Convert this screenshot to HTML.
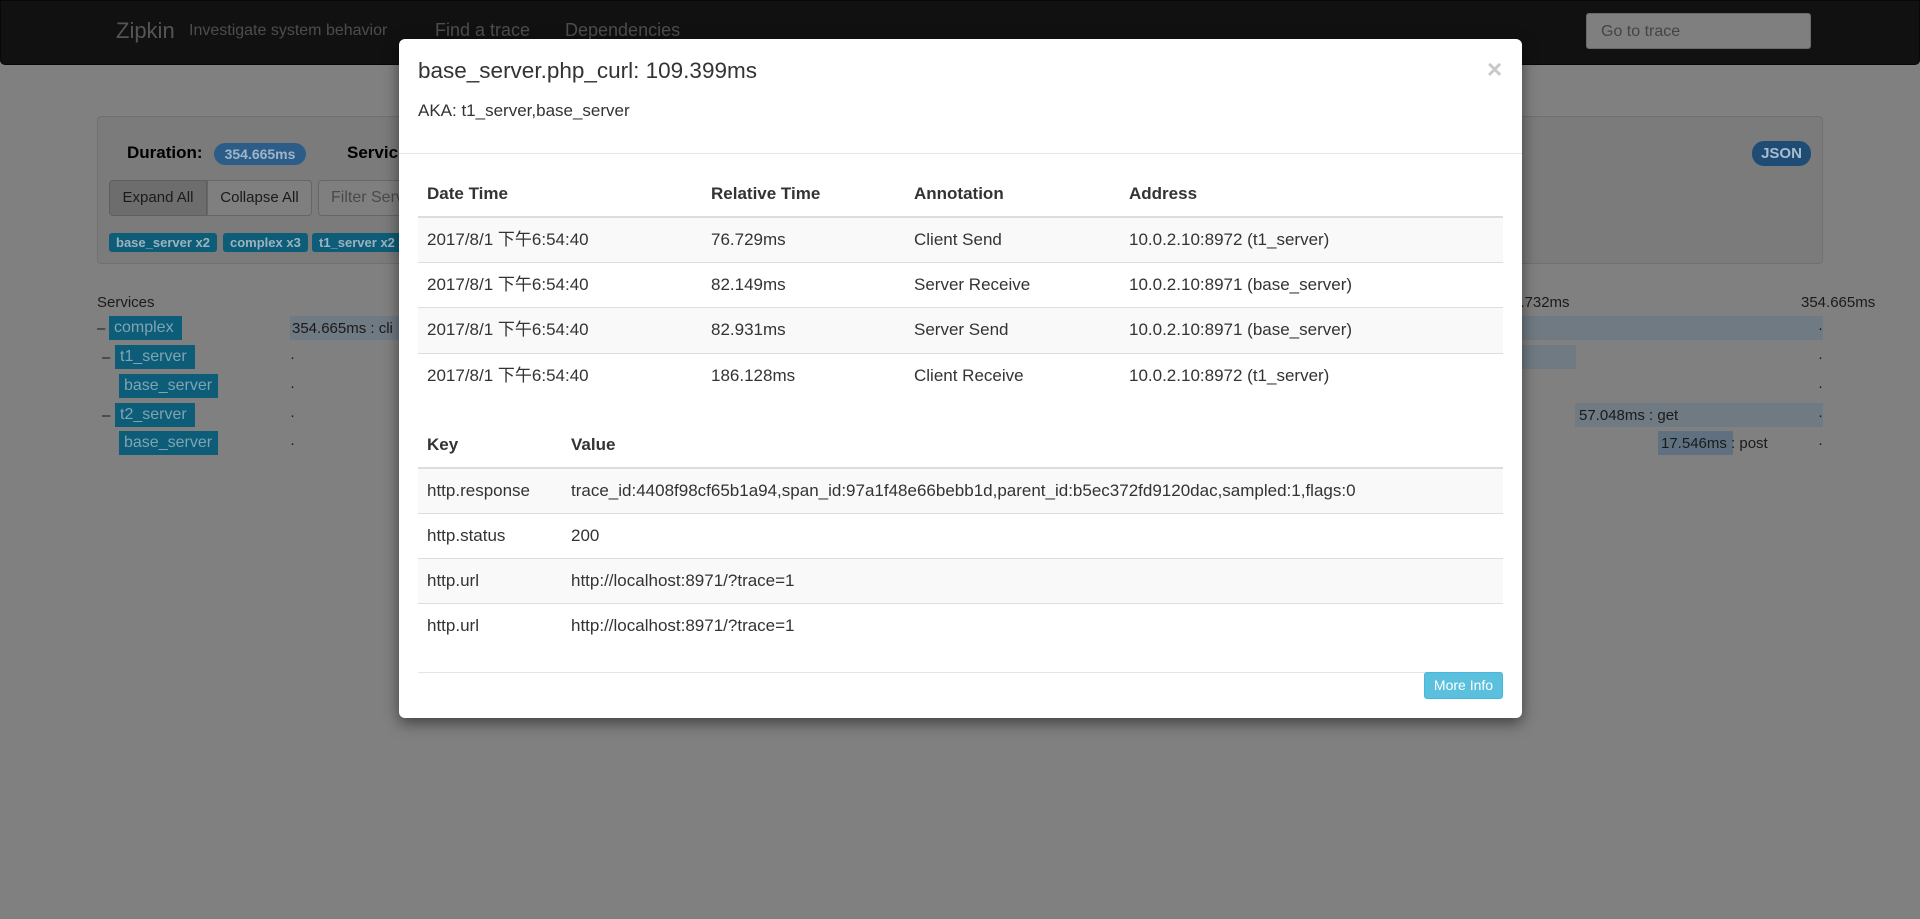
<!DOCTYPE html>
<html><head><meta charset="utf-8"><style>
*{box-sizing:border-box;margin:0;padding:0}
body{width:1920px;height:919px;background:#808080;font-family:"Liberation Sans","Noto Sans CJK SC",sans-serif;font-size:17px;color:#333;position:relative;overflow:hidden}
.a{position:absolute;white-space:nowrap}
.nav{left:0;top:0;width:1920px;height:65px;background:#111;border-radius:0 0 5px 5px;border:1px solid #080808}
.nv{color:#4d4d4d;font-size:18px}
.bdg{background:#0d5d78;color:#9cb3bd;font-weight:bold;font-size:13px;border-radius:3px;height:19px;line-height:19px;padding:0 7px}
.svc{background:#0d5d78;color:#7fa4b3;font-size:16px;line-height:24px;height:24px;padding:0 5px}
.bar{background:#707a83;height:24px}
.txt{color:#1a1a1a;font-size:15px}
.modal{left:399px;top:39px;width:1123px;height:679px;background:#fff;border-radius:6px;box-shadow:0 5px 15px rgba(0,0,0,.5)}
table{border-collapse:collapse;position:absolute;left:19px;width:1085px;font-size:17px;line-height:20px}
th{text-align:left;font-weight:bold;padding:0 9px;border-bottom:2px solid #ddd}
td{padding:0 9px;border-top:1px solid #ddd;vertical-align:middle}
.cj{display:inline-block;height:20px;line-height:20px;overflow:visible;vertical-align:top}
tr.s td{background:#f9f9f9}
</style></head><body>
<div class="a nav"></div>
<div class="a" style="left:116px;top:18px;font-size:22px;color:#555">Zipkin</div>
<div class="a nv" style="left:189px;top:22px;font-size:16px">Investigate system behavior</div>
<div class="a nv" style="left:435px;top:20px">Find a trace</div>
<div class="a nv" style="left:565px;top:20px">Dependencies</div>
<div class="a" style="left:1586px;top:13px;width:225px;height:36px;background:#7f7f7f;border-radius:3px;border:1px solid #6a6a6a;color:#444;font-size:16px;padding:9px 14px">Go to trace</div>

<div class="a" style="left:97px;top:116px;width:1726px;height:148px;background:#7b7b7b;border:1px solid #707070;border-radius:4px"></div>
<div class="a" style="left:127px;top:143px;font-weight:bold;color:#000;font-size:17px">Duration:</div>
<div class="a" style="left:214px;top:143px;width:92px;height:22px;border-radius:11px;background:#2c5d88;color:#9fb4c7;font-weight:bold;font-size:14px;text-align:center;line-height:22px">354.665ms</div>
<div class="a" style="left:347px;top:143px;font-weight:bold;color:#000;font-size:17px">Servic</div>
<div class="a" style="left:1752px;top:141px;width:59px;height:25px;border-radius:12px;background:#1f4c75;color:#a8bccd;font-weight:bold;font-size:15px;text-align:center;line-height:25px">JSON</div>
<div class="a" style="left:109px;top:180px;width:98px;height:36px;background:#6d6d6d;border:1px solid #5f5f5f;border-radius:4px 0 0 4px;color:#1a1a1a;font-size:15px;line-height:34px;text-align:center">Expand All</div>
<div class="a" style="left:207px;top:180px;width:105px;height:36px;background:#7f7f7f;border:1px solid #666;border-radius:0 4px 4px 0;color:#1a1a1a;font-size:15px;line-height:34px;text-align:center">Collapse All</div>
<div class="a" style="left:318px;top:180px;width:90px;height:36px;background:#7f7f7f;border:1px solid #666;border-radius:4px;color:#4a4a4a;font-size:16px;line-height:34px;padding-left:12px">Filter Serv</div>
<div class="a bdg" style="left:109px;top:233px">base_server x2</div>
<div class="a bdg" style="left:223px;top:233px">complex x3</div>
<div class="a bdg" style="left:312px;top:233px">t1_server x2</div>

<div class="a txt" style="left:97px;top:294px">Services</div>
<div class="a txt" style="left:1512px;top:294px">3.732ms</div>
<div class="a txt" style="left:1801px;top:294px">354.665ms</div>
<div class="a txt" style="left:97px;top:320px">–</div>
<div class="a txt" style="left:102px;top:349px">–</div>
<div class="a txt" style="left:102px;top:407px">–</div>
<div class="a svc" style="left:109px;top:316px;width:73px">complex</div>
<div class="a svc" style="left:115px;top:345px;width:80px">t1_server</div>
<div class="a svc" style="left:119px;top:374px;width:99px">base_server</div>
<div class="a svc" style="left:115px;top:403px;width:80px">t2_server</div>
<div class="a svc" style="left:119px;top:431px;width:99px">base_server</div>
<div class="a bar" style="left:290px;top:316px;width:1533px"></div>
<div class="a txt" style="left:292px;top:320px">354.665ms : cli</div>
<div class="a bar" style="left:1500px;top:345px;width:76px"></div>
<div class="a bar" style="left:1575px;top:403px;width:248px"></div>
<div class="a txt" style="left:1579px;top:407px">57.048ms : get</div>
<div class="a" style="left:1658px;top:431px;width:75px;height:24px;background:#5f7181"></div>
<div class="a txt" style="left:1661px;top:435px">17.546ms : post</div>
<div class="a txt" style="left:1818px;top:320px">·</div>
<div class="a txt" style="left:1818px;top:349px">·</div>
<div class="a txt" style="left:1818px;top:378px">·</div>
<div class="a txt" style="left:1818px;top:407px">·</div>
<div class="a txt" style="left:1818px;top:435px">·</div>
<div class="a txt" style="left:290px;top:349px">·</div>
<div class="a txt" style="left:290px;top:378px">·</div>
<div class="a txt" style="left:290px;top:407px">·</div>
<div class="a txt" style="left:290px;top:435px">·</div>

<div class="a modal">
<div class="a" style="left:19px;top:19px;font-size:22.5px;color:#333">base_server.php_curl: 109.399ms</div>
<div class="a" style="left:19px;top:62px;font-size:17px">AKA: t1_server,base_server</div>
<div class="a" style="left:1088px;top:15px;font-size:26px;font-weight:bold;color:#c8c8c8">×</div>
<div class="a" style="left:0;top:114px;width:1123px;height:1px;background:#e5e5e5"></div>
<table style="top:133px">
<tr style="height:45px"><th style="width:284px">Date Time</th><th style="width:203px">Relative Time</th><th style="width:215px">Annotation</th><th>Address</th></tr>
<tr class="s" style="height:45px"><td><span class="cj">2017/8/1 下午6:54:40</span></td><td>76.729ms</td><td>Client Send</td><td>10.0.2.10:8972 (t1_server)</td></tr>
<tr style="height:45px"><td><span class="cj">2017/8/1 下午6:54:40</span></td><td>82.149ms</td><td>Server Receive</td><td>10.0.2.10:8971 (base_server)</td></tr>
<tr class="s" style="height:46px"><td><span class="cj">2017/8/1 下午6:54:40</span></td><td>82.931ms</td><td>Server Send</td><td>10.0.2.10:8971 (base_server)</td></tr>
<tr style="height:45px"><td><span class="cj">2017/8/1 下午6:54:40</span></td><td>186.128ms</td><td>Client Receive</td><td>10.0.2.10:8972 (t1_server)</td></tr>
</table>
<table style="top:383px">
<tr style="height:46px"><th style="width:144px">Key</th><th>Value</th></tr>
<tr class="s" style="height:45px"><td>http.response</td><td>trace_id:4408f98cf65b1a94,span_id:97a1f48e66bebb1d,parent_id:b5ec372fd9120dac,sampled:1,flags:0</td></tr>
<tr style="height:45px"><td>http.status</td><td>200</td></tr>
<tr class="s" style="height:45px"><td>http.url</td><td>http://localhost:8971/?trace=1</td></tr>
<tr style="height:45px"><td>http.url</td><td>http://localhost:8971/?trace=1</td></tr>
</table>
<div class="a" style="left:19px;top:633px;width:1085px;height:1px;background:#e5e5e5"></div>
<div class="a" style="left:1025px;top:633px;width:79px;height:27px;background:#5bc0de;border:1px solid #46b8da;border-radius:3px;color:#fff;font-size:14px;text-align:center;line-height:25px">More Info</div>
</div>
</body></html>
